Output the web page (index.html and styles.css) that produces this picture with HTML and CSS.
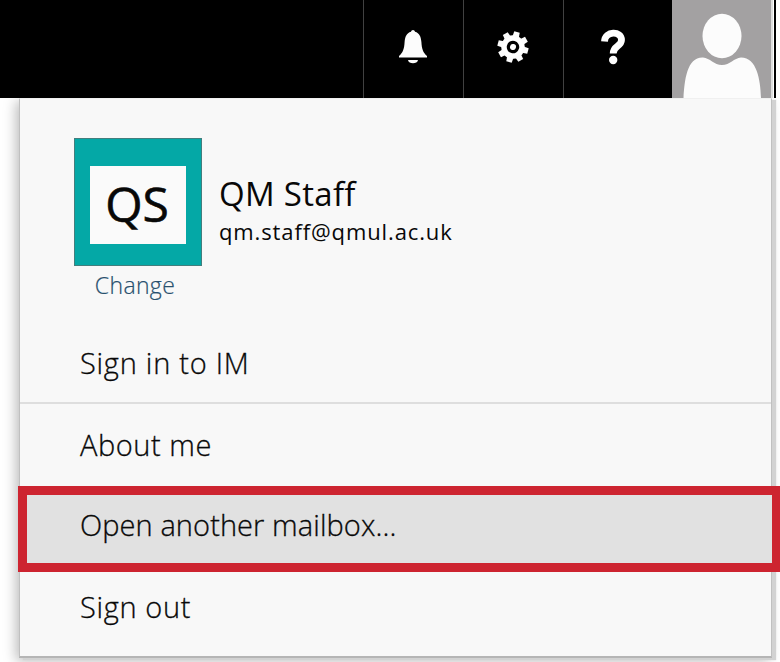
FILE: index.html
```html
<!DOCTYPE html>
<html lang="en">
<head>
<meta charset="utf-8">
<title>Account menu</title>
<link rel="stylesheet" href="styles.css">
</head>
<body>
<header class="topbar">
  <div class="tool">
    <svg width="32" height="36" viewBox="0 0 32 36"><path d="M16 1c-1 0-1.700.7-2 1.800C9.500 4 8 8 7.600 13 7.200 20 6 23.500 2 27v1.600h28V27c-4-3.500-5.200-7-5.600-14C24 8 22.500 4 18 2.800 17.700 1.700 17 1 16 1zM11 31h10c-.5 4.300-9.500 4.300-10 0z"/></svg>
  </div>
  <div class="tool">
    <svg width="32" height="32" viewBox="-16 -16 32 32"><g transform="rotate(15)"><circle r="9" fill="none" stroke="#fff" stroke-width="5.500"/><circle r="3"/><path d="M-3.300-10h6.600l-.5-5.500h-5.600z"/><path transform="rotate(45)" d="M-3.300-10h6.600l-.5-5.500h-5.600z"/><path transform="rotate(90)" d="M-3.300-10h6.600l-.5-5.500h-5.600z"/><path transform="rotate(135)" d="M-3.300-10h6.600l-.5-5.500h-5.600z"/><path transform="rotate(180)" d="M-3.300-10h6.600l-.5-5.500h-5.600z"/><path transform="rotate(225)" d="M-3.300-10h6.600l-.5-5.500h-5.600z"/><path transform="rotate(270)" d="M-3.300-10h6.600l-.5-5.500h-5.600z"/><path transform="rotate(315)" d="M-3.300-10h6.600l-.5-5.500h-5.600z"/></g></svg>
  </div>
  <div class="tool help">
    <svg width="26" height="36" viewBox="0 0 26 36"><path d="M4.500 12.500C5 1.500 21.500 1.500 21.500 11c0 6.500-8.300 5.500-8.300 13.500" fill="none" stroke="#fff" stroke-width="6.800"/><circle cx="13.200" cy="31" r="4.200"/></svg>
  </div>
  <div class="avatar">
    <svg width="99" height="98" viewBox="0 0 99 98"><ellipse cx="50" cy="36" rx="19.500" ry="22.300"/><path d="M11.500 98C12.500 80 15 57 31 57.500c7 .5 11 7.500 19 7.500s12-7 19-7.500c16 0 19.500 22.500 20 40.500z"/></svg>
  </div>
  <div class="edge"></div>
</header>
<main class="panel">
  <section class="profile">
    <div class="picture">
      <div class="tile"><div class="initials"><span>QS</span></div></div>
      <a class="change">Change</a>
    </div>
    <div class="identity">
      <div class="name">QM Staff</div>
      <div class="email">qm.staff@qmul.ac.uk</div>
    </div>
  </section>
  <nav class="menu">
    <a class="item im"><span>Sign in to IM</span></a>
    <a class="item about"><span>About me</span></a>
    <a class="item selected"><span>Open another mailbox...</span></a>
    <a class="item out"><span>Sign out</span></a>
  </nav>
</main>
</body>
</html>
```
FILE: styles.css
```css
* { box-sizing: border-box; }
body {
  margin: 0;
  width: 780px;
  height: 662px;
  overflow: hidden;
  background: #fff;
  color: #080808;
  font-family: "Open Sans", "Noto Sans", sans-serif;
}
.topbar {
  display: flex;
  justify-content: flex-end;
  height: 98px;
  padding-right: 4px;
  background: linear-gradient(to right, #000 776px, #fff 776px);
}
.tool {
  display: flex;
  align-items: center;
  justify-content: center;
  width: 100px;
  padding: 0 2px 4px 0;
  border-left: 1px solid #414141;
}
.help { width: 109px; padding-right: 11px; }
svg { display: block; fill: #fcfcfc; }
.avatar { width: 99px; background: #a3a1a2; }
.edge { width: 5px; border-left: 2px solid #ddd; border-right: 2px solid #000; background: #fff; }
.panel {
  width: 753px;
  height: 560px;
  margin-left: 19px;
  background: #f8f8f8;
  border: 1px solid #c0c0c0;
  border-top-color: #f0f0f0;
  border-bottom: 2px solid #b5b5b5;
  box-shadow: 4px 2px 1px #d2d2d2, -3px 3px 12px #bbb;
  clip-path: inset(0 -12px -12px -20px);
}
.profile { display: flex; height: 224px; padding: 39px 0 0 54px; }
.picture { width: 128px; text-align: center; }
.tile { height: 128px; padding: 27px 15px 21px; background: #04a8a6; border: 1px solid #437e7d; }
.initials {
  display: flex;
  align-items: center;
  justify-content: center;
  height: 78px;
  background: #fafafa;
  font-size: 48px;
  line-height: 74px;
  padding: 0 2px 3px 0;
  -webkit-text-stroke: .6px #080808;
}
.change { display: block; margin: 3px 0 0 -6px; color: #28506e; font-size: 23px; line-height: 32px; font-weight: 300; letter-spacing: .35px; -webkit-text-stroke: .2px #28506e; }
.identity { margin-left: 17px; padding-top: 34px; white-space: nowrap; }
.name { height: 43px; font-size: 33px; line-height: 44px; letter-spacing: .3px; }
.email { height: 32px; font-size: 22px; line-height: 32px; letter-spacing: .88px; }
.item {
  display: flex;
  align-items: center;
  padding-left: 60px;
  font-size: 29px;
  font-weight: 300;
  line-height: 40px;
  white-space: nowrap;
  -webkit-text-stroke: .3px #080808;
}
.im { height: 81px; border-bottom: 2px solid #dedede; letter-spacing: .75px; }
.about { height: 82px; letter-spacing: .55px; padding-bottom: 1px; }
.selected {
  width: 763px;
  height: 86px;
  margin-left: -2px;
  padding-left: 53px;
  padding-bottom: 8px;
  border: 9px solid #cd2430;
  background: #e1e1e1;
  position: relative;
  letter-spacing: .08px;
}
.out { height: 74px; padding-bottom: 4px; letter-spacing: .65px; }
```
